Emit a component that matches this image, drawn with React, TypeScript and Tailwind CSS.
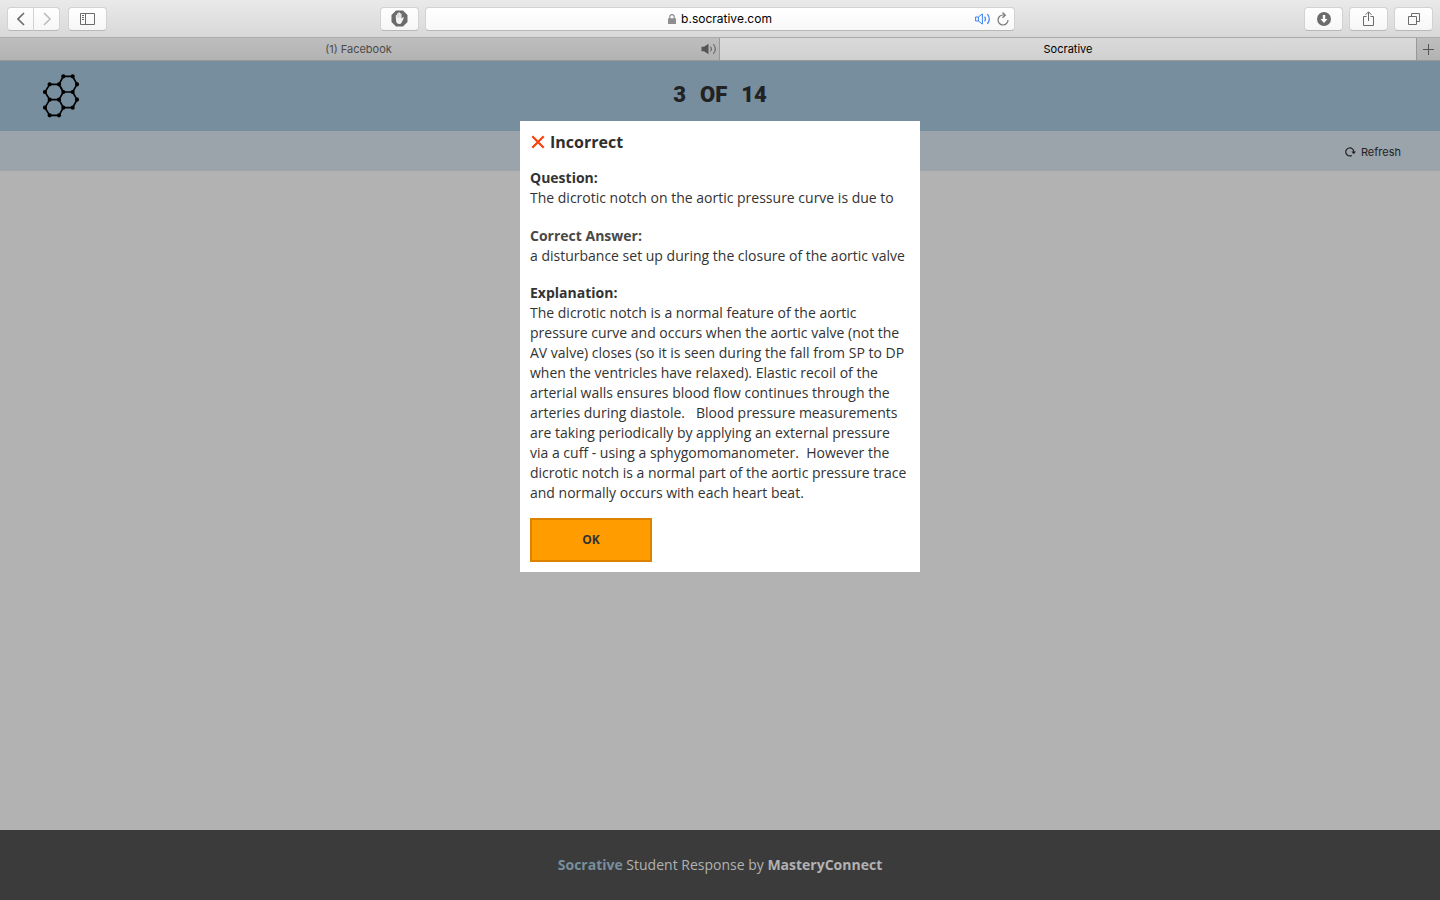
import type { ReactNode } from "react";

const toolButton =
  "flex h-6 items-center justify-center border border-[#d2d2d2] border-b-[#b8b8b8] bg-linear-to-b from-white to-[#f6f6f6] text-[#6b6b6b]";

function ToolButton({ label, className, children }: { label: string; className: string; children: ReactNode }) {
  return (
    <button type="button" aria-label={label} className={`${toolButton} ${className}`}>
      {children}
    </button>
  );
}

const atoms = [
  [190, 229], [218, 229], [231, 253], [218, 276], [190, 276], [177, 253], [149, 253], [135, 276],
  [149, 299], [177, 299], [190, 323], [218, 323], [231, 299], [135, 323], [149, 346], [177, 346],
];

function MoleculeLogo() {
  return (
    <svg viewBox="129 222 108 132" className="h-11 w-9" role="img" aria-label="Socrative">
      <g fill="none" stroke="#000" strokeWidth="5">
        <path d="M190 229H218L231 253L218 276H190L177 253Z" />
        <path d="M149 253H177L190 276L177 299H149L135 276Z" />
        <path d="M218 276L231 299L218 323H190L177 299" />
        <path d="M190 323L177 346H149L135 323L149 299" />
      </g>
      {atoms.map(([x, y]) => (
        <circle key={`${x}-${y}`} cx={x} cy={y} r="6.2" />
      ))}
    </svg>
  );
}

function BrowserToolbar() {
  return (
    <div className="grid h-[38px] grid-cols-[1fr_590px_1fr] items-center gap-x-[6px] border-b border-[#ababab] bg-linear-to-b from-[#eaeaea] to-[#d8d8d8] px-[7px]">
      <div className="flex">
        <ToolButton label="Back" className="w-[27px] rounded-l-[4px]">
          <svg width="8" height="14" viewBox="0 0 8 14" fill="none" stroke="currentColor" strokeWidth="1.6">
            <path d="M7 1L1 7L7 13" />
          </svg>
        </ToolButton>
        <ToolButton label="Forward" className="w-[26px] rounded-r-[4px] border-l-0">
          <svg width="8" height="14" viewBox="0 0 8 14" fill="none" stroke="#bdbdbd" strokeWidth="1.6">
            <path d="M1 1L7 7L1 13" />
          </svg>
        </ToolButton>
        <ToolButton label="Show sidebar" className="ml-2 w-[39px] rounded-[4px]">
          <svg width="15" height="12" viewBox="0 0 15 12" fill="none" stroke="currentColor">
            <path d="M.5 .5H14.5V11.5H.5ZM5.5 .5V11.5M2 2.5H4M2 4.5H4M2 6.5H4" />
          </svg>
        </ToolButton>
        <ToolButton label="Content blocker" className="ml-auto w-[39px] rounded-[4px]">
          <svg width="17" height="17" viewBox="0 0 17 17">
            <path d="M5 .5H12L16.5 5V12L12 16.5H5L.5 12V5Z" fill="#6b6b6b" />
            <path
              d="M4.8 8V5.2Q5.4 4.2 6.1 5.2V3.7Q6.8 2.6 7.5 3.6V2.8Q8.3 1.8 9 2.8V3.7Q9.8 2.7 10.5 3.8V8.6L12 7.2Q13.2 7 12.8 8.1L10.7 12.5Q10 14 8.3 14Q5.8 14 5.3 11.9Z"
              fill="#f3f3f3"
            />
            <path d="M6.1 5V8M7.5 4V7.7M9 4V7.8" stroke="#aaa" strokeWidth=".4" />
          </svg>
        </ToolButton>
      </div>
      <div className="grid h-6 grid-cols-[1fr_auto_1fr] items-center rounded-[4px] border border-[#d2d2d2] border-b-[#b8b8b8] bg-linear-to-b from-white to-[#f8f8f8] px-[5px] text-[12px] leading-4 text-black">
        <span />
        <div className="flex items-center gap-[5px]">
          <svg width="8" height="10" viewBox="0 0 8 10">
            <path d="M1.8 5V3Q1.8 .7 4 .7Q6.2 .7 6.2 3V5" fill="none" stroke="#8e8e8e" strokeWidth="1.2" />
            <rect y="4.3" width="8" height="5.7" rx=".6" fill="#8e8e8e" />
          </svg>
          <span>b.socrative.com</span>
        </div>
        <div className="flex items-center justify-end gap-[6px]">
          <button type="button" aria-label="Mute this tab" className="text-[#3c82f6]">
            <svg width="16" height="12" viewBox="0 0 16 12" fill="none" stroke="currentColor">
              <path d="M.6 4H3.4L7.4 .9V11.1L3.4 8H.6ZM3.4 4V8" />
              <path d="M9.6 3.6Q11.2 6 9.6 8.4M12.4 1.2Q16.2 6 12.4 10.8" strokeWidth="1.2" />
            </svg>
          </button>
          <button type="button" aria-label="Reload page" className="text-[#757575]">
            <svg width="12" height="14" viewBox="0 0 12 14" fill="none" stroke="currentColor" strokeWidth="1.2">
              <path d="M8 3H6A5 5 0 1 0 11 8" />
              <path d="M5.5 .5L8.3 3.2L5.5 5.8" />
            </svg>
          </button>
        </div>
      </div>
      <div className="flex justify-end gap-[6px]">
        <ToolButton label="Downloads" className="w-[39px] rounded-[4px]">
          <svg width="14" height="14" viewBox="0 0 14 14">
            <circle cx="7" cy="7" r="7" fill="#6b6b6b" />
            <path d="M5.8 3H8.2V7H10.5L7 11L3.5 7H5.8Z" fill="#fff" />
          </svg>
        </ToolButton>
        <ToolButton label="Share" className="w-[39px] rounded-[4px]">
          <svg width="11" height="15" viewBox="0 0 11 15" fill="none" stroke="currentColor">
            <path d="M3.5 5.5H.5V14.5H10.5V5.5H7.5M5.5 10V1M2.5 3.8L5.5 .8L8.5 3.8" />
          </svg>
        </ToolButton>
        <ToolButton label="Show all tabs" className="w-[39px] rounded-[4px]">
          <svg width="12" height="12" viewBox="0 0 12 12" fill="none" stroke="currentColor">
            <path d="M.5 3.5H8.5V11.5H.5ZM3.5 3V.5H11.5V8.5H9" />
          </svg>
        </ToolButton>
      </div>
    </div>
  );
}

function TabBar() {
  return (
    <div className="grid h-[23px] grid-cols-2 border-b border-[#999] text-[11px] leading-[22px]">
      <button
        type="button"
        className="grid grid-cols-[1fr_auto_1fr] items-center border-r border-[#989898] bg-linear-to-b from-[#bebebe] to-[#b3b3b3] pr-[2px] text-[#4b4b4b]"
      >
        <span />
        <span>(1) Facebook</span>
        <svg className="justify-self-end" width="16" height="12" viewBox="0 0 16 12" fill="none" stroke="#555">
          <path d="M.5 3.8H3L7.5 .8V11.2L3 8.2H.5Z" fill="#555" stroke="none" />
          <path d="M9.6 3.6Q11.2 6 9.6 8.4M12.4 1.2Q16.2 6 12.4 10.8" />
        </svg>
      </button>
      <div className="flex">
        <button type="button" className="flex-1 bg-linear-to-b from-[#dadada] to-[#d0d0d0] text-black">
          Socrative
        </button>
        <button
          type="button"
          aria-label="New tab"
          className="flex w-6 items-center justify-center border-l border-[#989898] bg-linear-to-b from-[#bebebe] to-[#b3b3b3]"
        >
          <svg width="11" height="11" viewBox="0 0 11 11" stroke="#555">
            <path d="M5.5 0V11M0 5.5H11" />
          </svg>
        </button>
      </div>
    </div>
  );
}

function AnswerDialog() {
  return (
    <section
      role="dialog"
      aria-labelledby="result-title"
      className="absolute top-[60px] left-1/2 w-[400px] -translate-x-1/2 bg-white p-[10px] font-['Open_Sans',sans-serif] text-[14px] leading-5 text-[#333]"
    >
      <h2 id="result-title" className="flex items-center gap-[5px] pl-[1px] text-[16px] leading-[22px] font-bold text-[#2e2e2e]">
        <svg width="14" height="14" viewBox="0 0 14 14" stroke="#f9420b" strokeWidth="2.2">
          <path d="M1.3 1.3L12.7 12.7M12.7 1.3L1.3 12.7" />
        </svg>
        Incorrect
      </h2>
      <h3 className="mt-[15px] font-bold">Question:</h3>
      <p>The dicrotic notch on the aortic pressure curve is due to</p>
      <h3 className="mt-[18px] font-bold text-[#484848]">Correct Answer:</h3>
      <p>a disturbance set up during the closure of the aortic valve</p>
      <h3 className="mt-[17px] font-bold">Explanation:</h3>
      <p className="whitespace-pre-wrap">
        {"The dicrotic notch is a normal feature of the aortic pressure curve and occurs when the aortic valve (not the AV valve) closes (so it is seen during the fall from SP to DP when the ventricles have relaxed). Elastic recoil of the arterial walls ensures blood flow continues through the arteries during diastole.   Blood pressure measurements are taking periodically by applying an external pressure via a cuff - using a sphygomomanometer.  However the dicrotic notch is a normal part of the aortic pressure trace and normally occurs with each heart beat."}
      </p>
      <button
        type="button"
        className="mt-[15px] block h-11 w-[122px] border-2 border-[#db8300] bg-[#ff9c00] text-[12px] leading-4 font-bold text-[#333]"
      >
        OK
      </button>
    </section>
  );
}

export default function App() {
  return (
    <div className="flex min-h-screen flex-col bg-[#b2b2b2] font-['Inter',sans-serif]">
      <BrowserToolbar />
      <TabBar />
      <div className="relative flex flex-1 flex-col">
        <header className="grid h-[70px] grid-cols-[1fr_auto_1fr] items-center bg-[#778e9e] px-[43px]">
          <MoleculeLogo />
          <h1 className="flex gap-[14px] pb-[2px] font-['Roboto',sans-serif] text-[22px] leading-7 font-black text-[#222]">
            <span>3</span>
            <span>OF</span>
            <span>14</span>
          </h1>
        </header>
        <div className="flex h-10 items-center justify-end bg-[#9ba3ab] px-[39px] pt-[2px]">
          <button type="button" className="flex items-center gap-[5px] text-[11px] leading-4 text-[#222]">
            <svg width="11" height="10" viewBox="0 0 11 10" fill="none" stroke="currentColor" strokeWidth="1.2">
              <path d="M6.8 8.4A4 4 0 1 1 8.8 5" />
              <path d="M6.4 4.4H11L8.7 7.2Z" fill="currentColor" stroke="none" />
            </svg>
            Refresh
          </button>
        </div>
        <main className="flex-1">
          <AnswerDialog />
        </main>
        <footer className="flex h-[70px] items-center justify-center bg-[#3b3b3b] font-['Open_Sans',sans-serif] text-[14px] leading-5 text-[#b2b2b2]">
          <p>
            <strong className="text-[#778e9e]">Socrative</strong> Student Response by <strong>MasteryConnect</strong>
          </p>
        </footer>
      </div>
    </div>
  );
}
